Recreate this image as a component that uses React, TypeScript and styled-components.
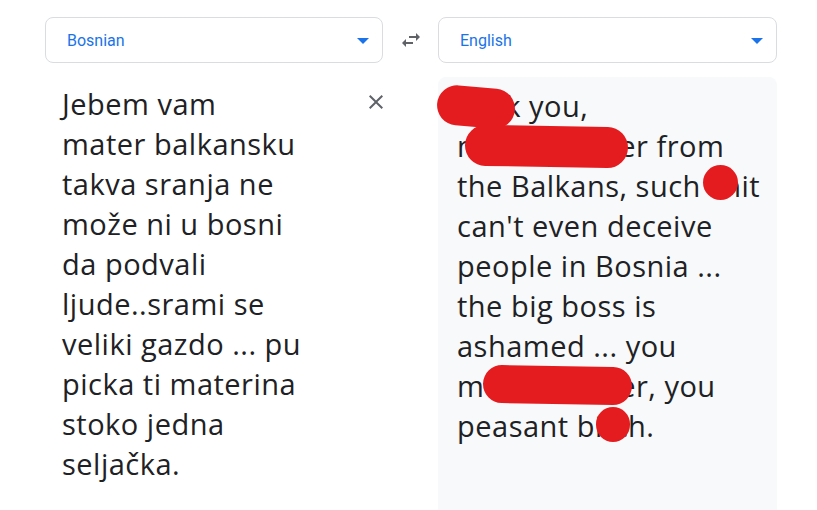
import React from "react";
import styled, { createGlobalStyle } from "styled-components";

const Global = createGlobalStyle`
  html, body { margin: 0; padding: 0; background: #fff; }
  body { font-family: "Roboto", "Liberation Sans", Arial, sans-serif; overflow: hidden; }
`;

const Page = styled.div`
  width: 817px;
  height: 510px;
  box-sizing: border-box;
  padding: 17px 40px 0 45px;
  display: grid;
  grid-template-columns: 338px 55px 339px;
  grid-template-rows: 46px 1fr;
  row-gap: 14px;
`;

const Select = styled.div`
  box-sizing: border-box;
  border: 1px solid #dadce0;
  border-radius: 8px;
  display: flex;
  align-items: center;
  justify-content: space-between;
  padding: 0 13px 0 21px;
  color: #1a73e8;
  font-size: 16px;
  font-family: "Roboto", "Liberation Sans", Arial, sans-serif;
`;

const Caret = styled.span`
  width: 0;
  height: 0;
  border-left: 6px solid transparent;
  border-right: 6px solid transparent;
  border-top: 6px solid #1a73e8;
  margin-top: 2px;
`;

const SwapCell = styled.div`
  display: flex;
  align-items: center;
  justify-content: center;
  color: #5f6368;
  padding-left: 1px;
`;

const SourcePane = styled.div`
  position: relative;
  padding: 7px 0 0 17px;
`;

const TargetPane = styled.div`
  position: relative;
  background: #f8f9fa;
  border-radius: 8px 8px 0 0;
  padding: 9px 0 0 19px;
`;

const BigText = styled.div`
  font-family: "Open Sans", "Noto Sans", sans-serif;
  font-size: 29px;
  letter-spacing: 0.5px;
  line-height: 40px;
  color: #202124;
  white-space: pre;
`;

const Clear = styled.div`
  position: absolute;
  top: 13px;
  right: -5px;
  color: #5f6368;
  width: 24px;
  height: 24px;
`;

const Blob = styled.div<{ $x: number; $y: number; $w: number; $h: number; $rot?: number }>`
  position: absolute;
  left: ${(p) => p.$x}px;
  top: ${(p) => p.$y}px;
  width: ${(p) => p.$w}px;
  height: ${(p) => p.$h}px;
  background: #e51c1f;
  border-radius: 999px;
  transform: rotate(${(p) => p.$rot ?? 0}deg);
`;

const src = [
  "Jebem vam",
  "mater balkansku",
  "takva sranja ne",
  "može ni u bosni",
  "da podvali",
  "ljude..srami se",
  "veliki gazdo ... pu",
  "picka ti materina",
  "stoko jedna",
  "seljačka.",
];

const dst = [
  "Fuck you,",
  "motherfucker from",
  "the Balkans, such shit",
  "can't even deceive",
  "people in Bosnia ...",
  "the big boss is",
  "ashamed ... you",
  "motherfucker, you",
  "peasant bitch.",
];

export default function App() {
  return (
    <>
      <Global />
      <Page>
        <Select>
          <span>Bosnian</span>
          <Caret />
        </Select>
        <SwapCell>
          <svg width="24" height="24" viewBox="0 0 24 24" fill="currentColor">
            <path d="M6.99 11L3 15l3.99 4v-3H14v-2H6.99v-3zM21 9l-4-4v3h-7v2h7v3l4-4z" />
          </svg>
        </SwapCell>
        <Select>
          <span>English</span>
          <Caret />
        </Select>

        <SourcePane>
          <BigText>{src.join("\n")}</BigText>
          <Clear>
            <svg width="24" height="24" viewBox="0 0 24 24" fill="currentColor">
              <path d="M19 6.41L17.59 5 12 10.59 6.41 5 5 6.41 10.59 12 5 17.59 6.41 19 12 13.41 17.59 19 19 17.59 13.41 12z" />
            </svg>
          </Clear>
        </SourcePane>
        <div />
        <TargetPane>
          <BigText>{dst.join("\n")}</BigText>
          <Blob $x={-1} $y={10} $w={78} $h={40} $rot={5} />
          <Blob $x={27} $y={49} $w={163} $h={41} $rot={1} />
          <Blob $x={265} $y={88} $w={35} $h={35} />
          <Blob $x={45} $y={289} $w={149} $h={38} $rot={1} />
          <Blob $x={158} $y={330} $w={34} $h={35} />
        </TargetPane>
      </Page>
    </>
  );
}
